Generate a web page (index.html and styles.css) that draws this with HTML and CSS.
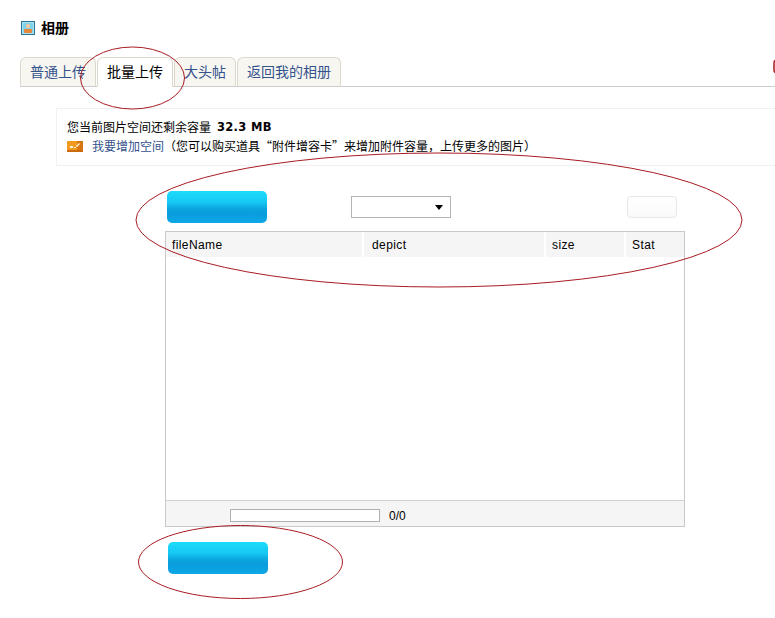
FILE: index.html
```html
<!DOCTYPE html>
<html lang="zh">
<head>
<meta charset="utf-8">
<title>相册</title>
<link rel="stylesheet" href="styles.css">
</head>
<body>
<div class="page">
  <h1 class="title">
    <svg class="title-icon" width="14" height="14" viewBox="0 0 14 14">
      <rect x="0.5" y="0.5" width="13" height="13" fill="#a8e4f0" stroke="#2f7396"/>
      <rect x="2" y="2" width="10" height="10" fill="#7fd2e8"/>
      <rect x="5" y="3" width="4" height="4" rx="1.500" fill="#f6c89c"/>
      <rect x="3" y="8" width="8" height="4" rx="1" fill="#e8873a"/>
    </svg>
    <span class="title-text">相册</span>
  </h1>
  <ul class="tabs">
    <li class="tab">普通上传</li>
    <li class="tab tab-active">批量上传</li>
    <li class="tab">大头帖</li>
    <li class="tab">返回我的相册</li>
  </ul>
  <div class="info">
    <p class="info-line">您当前图片空间还剩余容量 <b class="quota">32.3 MB</b></p>
    <p class="info-line">
      <svg class="card-icon" width="16" height="11" viewBox="0 0 16 11">
        <rect x="0" y="0" width="16" height="11" rx="1" fill="#f29a1e"/>
        <rect x="10" y="0" width="6" height="11" fill="#d9760f"/>
        <rect x="0" y="9" width="16" height="2" fill="#c96a0c"/>
        <path d="M3 5h3v2H3zM7 6h2v1H7zM9 5l3-3 1 1-3 3z" fill="#fff3d8"/>
      </svg>
      <a class="more-link">我要增加空间</a>
      <span class="hint">（您可以购买道具“附件增容卡”来增加附件容量，上传更多的图片）</span>
    </p>
  </div>
  <div class="uploader">
    <div class="toolbar">
      <div class="blue-btn"></div>
      <div class="select"><i class="caret"></i></div>
      <div class="white-btn"></div>
    </div>
    <div class="grid">
      <div class="grid-head">
        <div class="col col-name">fileName</div>
        <div class="col col-depict">depict</div>
        <div class="col col-size">size</div>
        <div class="col col-stat">Stat</div>
      </div>
      <div class="grid-body"></div>
      <div class="grid-foot">
        <div class="progress"></div>
        <span class="count">0/0</span>
      </div>
    </div>
    <div class="blue-btn blue-btn-bottom"></div>
  </div>
</div>
<svg class="marks" width="775" height="618" viewBox="0 0 775 618" fill="none" stroke="#a81c22" stroke-width="1">
  <ellipse cx="132.500" cy="78" rx="52" ry="31"/>
  <ellipse cx="439" cy="220" rx="303" ry="67"/>
  <ellipse cx="240.500" cy="562" rx="102" ry="36.500"/>
  <rect class="mark-stub" x="774" y="60.500" width="6" height="12" rx="2"/>
</svg>
</body>
</html>
```
FILE: styles.css
```css
* { box-sizing: border-box; }
html, body {
  margin: 0;
  padding: 0;
  overflow: hidden;
  background: #fff;
}
body {
  position: relative;
  width: 775px;
  height: 618px;
  font-family: "Noto Sans CJK SC", "Liberation Sans", sans-serif;
  font-size: 12px;
  color: #000;
}
.page {
  padding: 21px 0 0 20px;
}
.title {
  display: flex;
  align-items: center;
  gap: 6px;
  height: 14px;
  margin: 0 0 22px 1px;
  font-size: 14px;
  line-height: 14px;
  font-weight: 700;
}
.title-icon { display: block; }
.title-text { margin-bottom: 2px; }
.tabs {
  display: flex;
  gap: 1px;
  height: 30px;
  margin: 0;
  padding: 0;
  list-style: none;
  border-bottom: 1px solid #ccc;
}
.tab {
  height: 30px;
  padding: 0 9px;
  border: 1px solid #dcd8cc;
  border-bottom: 1px solid #ccc;
  border-radius: 6px 6px 0 0;
  background: #f7f6f1;
  color: #34528c;
  font-size: 14px;
  line-height: 27px;
}
.tab-active {
  background: #fff;
  border-bottom-color: #fff;
  color: #000;
}
.info {
  height: 58px;
  margin: 21px 0 0 36px;
  padding: 9px 0 0 10px;
  border: 1px solid #f0f0f0;
  border-right: 0;
}
.info-line {
  display: flex;
  align-items: center;
  height: 18px;
  margin: 0 0 1px;
  white-space: nowrap;
  line-height: 18px;
}
.quota {
  margin-left: 6px;
  font-family: "DejaVu Sans", sans-serif;
  font-size: 11.500px;
  letter-spacing: 0.300px;
}
.card-icon { margin-right: 9px; }
.more-link { color: #34528c; }
.uploader {
  width: 520px;
  margin: 25px 0 0 145px;
}
.toolbar {
  display: flex;
  align-items: center;
  height: 32px;
  margin-bottom: 8px;
  padding-left: 2px;
}
.blue-btn {
  width: 100px;
  height: 32px;
  border-radius: 5px;
  background: linear-gradient(#1ddcfb 0%, #16c8f3 35%, #0ba6de 55%, #0a9cdc 70%, #0ea8e8 100%);
}
.select {
  position: relative;
  width: 100px;
  height: 22px;
  margin: 0 0 0 84px;
  border: 1px solid #b4b4b4;
  background: #fff;
}
.caret {
  position: absolute;
  top: 8px;
  right: 7px;
  border: 4px solid transparent;
  border-top: 5px solid #000;
  border-bottom: 0;
}
.white-btn {
  width: 50px;
  height: 22px;
  margin: 0 0 0 176px;
  border: 1px solid #e8e6e6;
  border-radius: 4px;
  background: linear-gradient(#fff, #fafafa);
}
.grid {
  height: 296px;
  border: 1px solid #c8c8c8;
  display: flex;
  flex-direction: column;
}
.grid-head {
  display: flex;
  gap: 2px;
  height: 25px;
  font-family: "Liberation Sans", sans-serif;
  letter-spacing: 0.400px;
  line-height: 27px;
}
.col {
  padding-left: 6px;
  background: #f5f5f5;
}
.col-name { width: 196px; }
.col-depict { width: 180px; padding-left: 8px; }
.col-size { width: 78px; }
.col-stat { flex: 1; }
.grid-body { flex: 1; }
.grid-foot {
  display: flex;
  align-items: center;
  height: 26px;
  padding: 3px 0 0 64px;
  border-top: 1px solid #d0d0d0;
  background: #f5f5f5;
  font-family: "Liberation Sans", sans-serif;
}
.progress {
  width: 150px;
  height: 13px;
  border: 1px solid #b0b0b0;
  background: #fff;
}
.count { margin: 1px 0 0 9px; }
.blue-btn-bottom { margin: 15px 0 0 3px; }
.marks {
  position: absolute;
  top: 0;
  left: 0;
  pointer-events: none;
}
.mark-stub { stroke-width: 1.500; }
```
